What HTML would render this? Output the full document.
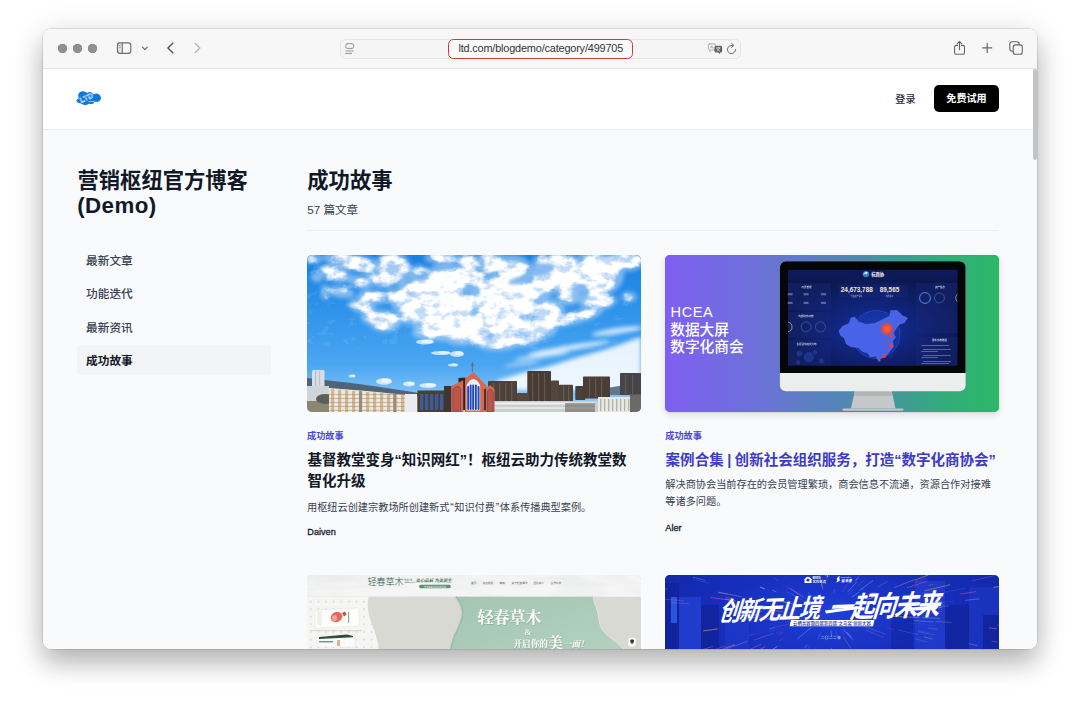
<!DOCTYPE html>
<html lang="zh-CN">
<head>
<meta charset="utf-8">
<title>成功故事 - 营销枢纽官方博客 (Demo)</title>
<style>
*{box-sizing:border-box;margin:0;padding:0}
html,body{width:1080px;height:705px;overflow:hidden;background:#fff}
body{font-family:"Liberation Sans","Noto Sans CJK SC",sans-serif;color:#111827;position:relative}
.abs{position:absolute}
#shadow{position:absolute;left:42.6px;top:28.8px;width:994.8px;height:620px;border-radius:8px;
  box-shadow:0 14px 26px rgba(0,0,0,.26),0 0 0 .5px rgba(0,0,0,.2),0 3px 36px rgba(0,0,0,.09)}
#win{position:absolute;left:43px;top:29px;width:994.4px;height:619.8px;border-radius:8px;overflow:hidden;background:#f9fafb}
#toolbar{position:absolute;left:0;top:0;width:995px;height:40px;background:#f7f7f7;border-bottom:1px solid #e4e4e4}
.tl{position:absolute;top:14.75px;width:9.5px;height:9.5px;border-radius:50%;background:#8c8f93;box-shadow:inset 0 0 0 .5px #7f8286}
#addr{position:absolute;left:297px;top:9.5px;width:401px;height:20.5px;border-radius:5.5px;background:#f5f5f5;border:1px solid #e3e3e3}
#redbox{position:absolute;left:404.7px;top:9.7px;width:185px;height:20.5px;border-radius:5.5px;border:1.5px solid #cf3a2f;background:#fbfbfb}
#url{position:absolute;left:415.4px;top:8.9px;height:20.5px;line-height:20.5px;font-size:10.9px;color:#333;white-space:nowrap;letter-spacing:-.17px}
#header{position:absolute;left:0;top:40px;width:995px;height:61px;background:#fff;border-bottom:1px solid #eceef0}
#login{position:absolute;left:852.3px;top:22.5px;font-size:10.1px;font-weight:500;color:#1f2937;line-height:16px;white-space:nowrap}
#trial{position:absolute;left:891px;top:16px;width:65px;height:27px;border-radius:5px;background:#000;color:#fff;font-size:10.1px;font-weight:700;line-height:28.4px;text-align:center;white-space:nowrap}
#scroll{position:absolute;left:990.4px;top:39.5px;width:3.8px;height:91.5px;border-radius:2px;background:#c3c3c3}
h1,h2{font-weight:700;font-size:21.3px;line-height:27.5px;color:#111827;position:absolute;white-space:nowrap}
.nav{position:absolute;left:34px;width:194px;height:30px;border-radius:4px;padding-left:9px;font-size:11.7px;line-height:32px;font-weight:500;color:#374151;white-space:nowrap;overflow:hidden}
.nav.on{background:#f3f4f6;color:#111827;font-weight:700}
#count{position:absolute;left:264.3px;top:171.6px;font-size:11.6px;line-height:18px;color:#374151;white-space:nowrap}
#rule{position:absolute;left:264px;top:201px;width:692px;height:1px;background:#eceef1}
.img{position:absolute;width:334px;height:157px;border-radius:5px;overflow:hidden}
.img svg{display:block}
.cat{position:absolute;font-size:9.17px;font-weight:700;color:#4845dd;line-height:12px;white-space:nowrap}
.ttl{position:absolute;width:340px;font-size:14.52px;font-weight:700;line-height:21.1px;color:#111827;white-space:nowrap}
.ttl .q{display:inline-block;width:7.2px;text-align:center}
.ttl .b{letter-spacing:-.4px}
.desc .q{display:inline-block;width:4.8px;text-align:center}
.desc{position:absolute;width:340px;font-size:10.18px;line-height:17px;color:#374151;white-space:nowrap}
.auth{position:absolute;font-size:9.17px;font-weight:500;-webkit-text-stroke:.28px #111827;line-height:14px;color:#111827;white-space:nowrap}
</style>
</head>
<body>
<div id="shadow"></div>
<div id="win">
  <div id="toolbar">
    <div class="tl" style="left:14.5px"></div><div class="tl" style="left:29.7px"></div><div class="tl" style="left:44.8px"></div>
    <div id="addr"></div>
    <div id="redbox"></div>
    <div id="url">ltd.com/blogdemo/category/499705</div>
    <svg style="position:absolute;left:0;top:0" width="995" height="40" viewBox="43 29 995 40" fill="none" stroke-linecap="round" stroke-linejoin="round">
<!-- sidebar -->
<path d="M119.8 42.9 H122.2 V53.3 H119.8 A2.3 2.3 0 0 1 117.5 51 V45.2 A2.3 2.3 0 0 1 119.8 42.9Z" fill="#e4e4e3" stroke="none"/>
<rect x="117.5" y="42.9" width="13.3" height="10.4" rx="2.4" stroke="#716c68" stroke-width="1.15"/>
<path d="M122.3 43 V53.2" stroke="#716c68" stroke-width="1.05"/>
<path d="M119.3 45.6 H120.5 M119.3 47.3 H120.5" stroke="#8a8682" stroke-width=".6"/>
<path d="M136.7 41.8 V54.4" stroke="#ebebeb" stroke-width=".6"/>
<path d="M142.5 47.2 L144.9 49.6 L147.3 47.2" stroke="#6a6a6a" stroke-width="1.2"/>
<path d="M172.8 43.3 L167.9 48 L172.8 52.7" stroke="#4c4c4c" stroke-width="1.35"/>
<path d="M195 43.3 L199.9 48 L195 52.7" stroke="#b3b3b3" stroke-width="1.25"/>
<!-- reader -->
<rect x="345.8" y="43.7" width="7.8" height="4.7" rx="1.5" stroke="#8f9296" stroke-width="1"/>
<path d="M345.7 51 H353.8" stroke="#b3b6b9" stroke-width="1.3" stroke-linecap="butt"/>
<path d="M345.7 53.4 H351.6" stroke="#6f6f6f" stroke-width=".75"/>
<!-- translate -->
<path d="M709.8 43.8 H714 A1.4 1.4 0 0 1 715.4 45.2 V48.5 A1.4 1.4 0 0 1 714 49.9 H711.6 L710 51.5 V49.9 H709.8 A1.4 1.4 0 0 1 708.4 48.5 V45.2 A1.4 1.4 0 0 1 709.8 43.8Z" stroke="#9b9b9b" stroke-width=".8" fill="#f6f6f6"/>
<path d="M710.6 48.4 L711.9 45.4 L713.2 48.4 M711 47.5 H712.8" stroke="#a5a5a5" stroke-width=".6"/>
<path d="M716 45.8 H720.6 A1.5 1.5 0 0 1 722.1 47.3 V50.9 A1.5 1.5 0 0 1 720.6 52.4 H720 V54 L718.2 52.4 H716 A1.5 1.5 0 0 1 714.5 50.9 V47.3 A1.5 1.5 0 0 1 716 45.8Z" fill="#5f5f5d" stroke="none"/>
<path d="M716.6 47.9 H720 M718.3 47 V47.9 M717 51.2 Q718.6 50.4 719.6 48 M719.7 51.2 Q718 50.4 717 48.6" stroke="#f3f3f3" stroke-width=".65"/>
<!-- reload -->
<path d="M735.6 49.6 A4.1 4.1 0 1 1 732.6 45.55" stroke="#6a6a6a" stroke-width="1"/>
<path d="M731.6 43.3 L733.9 45.4 L731.7 47.3" stroke="#6a6a6a" stroke-width="1"/>
<!-- share -->
<path d="M957.6 45.4 H956 A1.5 1.5 0 0 0 954.6 46.9 V52.8 A1.5 1.5 0 0 0 956 54.3 H963 A1.5 1.5 0 0 0 964.5 52.8 V46.9 A1.5 1.5 0 0 0 963 45.4 H961.4" stroke="#686561" stroke-width="1.1"/>
<path d="M959.5 41.6 V49.8 M957.2 43.8 L959.5 41.4 L961.8 43.8" stroke="#686561" stroke-width="1.1"/>
<!-- plus -->
<path d="M982.7 47.9 H991.7 M987.2 43.4 V52.4" stroke="#686561" stroke-width="1.2"/>
<!-- tabs -->
<rect x="1009.8" y="41.7" width="9.4" height="9.5" rx="2.4" stroke="#686561" stroke-width="1.1"/>
<rect x="1013.2" y="44.9" width="9.1" height="9.3" rx="2.3" stroke="#686561" stroke-width="1.1" fill="#f7f7f7"/>
</svg>

  </div>
  <div id="header">
    <svg style="position:absolute;left:32px;top:21px" width="28" height="18" viewBox="75 90 28 18">
<path d="M76.55 100.27 C76.81 99.61 78.27 98.75 78.53 97.89 C78.80 97.03 77.97 96.00 78.13 95.11 C78.30 94.22 78.83 93.16 79.52 92.53 C80.22 91.90 81.31 91.44 82.30 91.34 C83.29 91.24 84.68 91.67 85.48 91.94 C86.27 92.20 86.47 92.93 87.06 92.93 C87.66 92.93 88.25 92.00 89.05 91.94 C89.84 91.87 91.10 92.13 91.83 92.53 C92.55 92.93 92.75 94.15 93.41 94.32 C94.07 94.48 94.87 93.49 95.79 93.52 C96.72 93.56 98.11 93.85 98.97 94.52 C99.83 95.18 100.75 96.53 100.95 97.49 C101.15 98.45 100.69 99.54 100.16 100.27 C99.63 101.00 98.70 101.59 97.78 101.86 C96.85 102.12 95.33 101.59 94.60 101.86 C93.88 102.12 94.07 103.08 93.41 103.44 C92.75 103.81 91.43 103.97 90.63 104.04 C89.84 104.11 89.25 103.71 88.65 103.84 C88.06 103.97 87.72 104.63 87.06 104.83 C86.40 105.03 85.48 105.13 84.68 105.03 C83.89 104.93 82.90 104.50 82.30 104.24 C81.71 103.97 81.71 103.64 81.11 103.44 C80.52 103.25 79.42 103.31 78.73 103.05 C78.04 102.78 77.31 102.32 76.94 101.86 C76.58 101.39 76.28 100.93 76.55 100.27Z" fill="#0c79e1"/>
<g transform="rotate(-24 86.3 97.7)" font-family="Liberation Sans, sans-serif" font-weight="700"><text x="86.3" y="100.3" text-anchor="middle" font-size="7.3" fill="#1f7fe3" stroke="#fff" stroke-width=".4" letter-spacing=".05">LTD</text></g>
<text x="88.6" y="102.4" font-family="Liberation Sans, sans-serif" font-size="1.9" font-weight="700" fill="#fff">Cloud</text>
</svg>
    <div id="login">登录</div>
    <div id="trial">免费试用</div>
  </div>
  <div id="scroll"></div>

  <h1 style="left:34.5px;top:139px">营销枢纽官方博客</h1>
  <h1 style="left:34.3px;top:163.4px;font-size:22.3px;letter-spacing:.4px">(Demo)</h1>
  <div class="nav" style="top:216px">最新文章</div>
  <div class="nav" style="top:249.3px">功能迭代</div>
  <div class="nav" style="top:282.7px">最新资讯</div>
  <div class="nav on" style="top:316px">成功故事</div>

  <h2 style="left:264.3px;top:139px">成功故事</h2>
  <div id="count">57 篇文章</div>
  <div id="rule"></div>

  <div class="img" id="img1" style="left:264px;top:226px;background:#3b8fd8"><svg width="334" height="157" viewBox="0 0 334 157">
<defs>
<linearGradient id="sky" x1="0" y1="0" x2="0" y2="1"><stop offset="0" stop-color="#167fe0"/><stop offset=".35" stop-color="#2f93ea"/><stop offset=".7" stop-color="#4aa6f2"/><stop offset=".88" stop-color="#7dc0f6"/><stop offset="1" stop-color="#a5d4f8"/></linearGradient>
<filter id="cb" x="0" y="0" width="100%" height="100%" color-interpolation-filters="sRGB"><feGaussianBlur in="SourceGraphic" stdDeviation="2.2" result="d"/><feTurbulence type="fractalNoise" baseFrequency=".075 .11" numOctaves="4" seed="11" result="n"/><feColorMatrix in="n" type="matrix" values="0 0 0 0 1 0 0 0 0 1 0 0 0 0 1 2.6 0 0 0 -.8" result="na"/><feComposite in="d" in2="na" operator="arithmetic" k1="0" k2="1.55" k3="1.0" k4="-.92" result="c"/><feGaussianBlur in="c" stdDeviation=".7"/></filter>
<filter id="cb2" x="-10%" y="-10%" width="120%" height="120%"><feGaussianBlur stdDeviation="2.2"/></filter>
<filter id="b15"><feGaussianBlur stdDeviation="1.6"/></filter>
<filter id="b05"><feGaussianBlur stdDeviation=".45"/></filter>
</defs>
<rect width="334" height="157" fill="url(#sky)"/>
<g filter="url(#cb2)" opacity=".5"><ellipse cx="7" cy="4" rx="8.75" ry="5.2" fill="#dbe8f9"/><ellipse cx="45" cy="7" rx="30.0" ry="9.1" fill="#dbe8f9" transform="rotate(10 45 7)"/><ellipse cx="86" cy="13" rx="18.75" ry="16.900000000000002" fill="#dbe8f9" transform="rotate(20 86 13)"/><ellipse cx="136" cy="3" rx="18.75" ry="6.5" fill="#dbe8f9"/><ellipse cx="162" cy="10" rx="11.25" ry="13.0" fill="#dbe8f9"/><ellipse cx="28" cy="19" rx="17.5" ry="7.800000000000001" fill="#dbe8f9" transform="rotate(15 28 19)"/><ellipse cx="53" cy="27" rx="12.5" ry="6.5" fill="#dbe8f9" transform="rotate(15 53 27)"/><ellipse cx="74" cy="26" rx="13.75" ry="7.15" fill="#dbe8f9" transform="rotate(10 74 26)"/><ellipse cx="143" cy="24" rx="30.0" ry="15.600000000000001" fill="#dbe8f9"/><ellipse cx="121" cy="36" rx="23.75" ry="13.0" fill="#dbe8f9" transform="rotate(15 121 36)"/><ellipse cx="18" cy="37" rx="4.375" ry="7.800000000000001" fill="#dbe8f9"/><ellipse cx="34" cy="37" rx="13.75" ry="5.8500000000000005" fill="#dbe8f9" transform="rotate(10 34 37)"/><ellipse cx="66" cy="42" rx="16.25" ry="7.15" fill="#dbe8f9" transform="rotate(5 66 42)"/><ellipse cx="89" cy="40" rx="12.5" ry="6.5" fill="#dbe8f9"/><ellipse cx="55" cy="51" rx="13.75" ry="7.15" fill="#dbe8f9" transform="rotate(10 55 51)"/><ellipse cx="108" cy="50" rx="25.0" ry="13.0" fill="#dbe8f9" transform="rotate(10 108 50)"/><ellipse cx="139" cy="47" rx="18.75" ry="15.600000000000001" fill="#dbe8f9"/><ellipse cx="160" cy="50" rx="11.25" ry="11.700000000000001" fill="#dbe8f9"/><ellipse cx="75" cy="64" rx="21.25" ry="9.1" fill="#dbe8f9" transform="rotate(5 75 64)"/><ellipse cx="78" cy="71" rx="13.75" ry="5.8500000000000005" fill="#dbe8f9"/><ellipse cx="108" cy="62" rx="20.0" ry="7.800000000000001" fill="#dbe8f9"/><ellipse cx="140" cy="67" rx="35.0" ry="19.5" fill="#dbe8f9"/><ellipse cx="155" cy="80" rx="20.0" ry="10.4" fill="#dbe8f9"/><ellipse cx="120" cy="78" rx="15.0" ry="6.5" fill="#dbe8f9"/><ellipse cx="100" cy="34" rx="10.0" ry="7.800000000000001" fill="#dbe8f9"/><ellipse cx="112" cy="20" rx="10.0" ry="10.4" fill="#dbe8f9"/><ellipse cx="64" cy="16" rx="10.0" ry="5.2" fill="#dbe8f9"/><ellipse cx="10" cy="22" rx="6.25" ry="5.2" fill="#dbe8f9"/><ellipse cx="185" cy="8" rx="17.5" ry="11.700000000000001" fill="#dbe8f9"/><ellipse cx="205" cy="14" rx="20.0" ry="14.3" fill="#dbe8f9"/><ellipse cx="196" cy="30" rx="25.0" ry="11.700000000000001" fill="#dbe8f9"/><ellipse cx="222" cy="36" rx="27.5" ry="13.0" fill="#dbe8f9" transform="rotate(-10 222 36)"/><ellipse cx="180" cy="45" rx="20.0" ry="15.600000000000001" fill="#dbe8f9"/><ellipse cx="205" cy="52" rx="27.5" ry="15.600000000000001" fill="#dbe8f9"/><ellipse cx="238" cy="55" rx="20.0" ry="11.700000000000001" fill="#dbe8f9"/><ellipse cx="255" cy="20" rx="37.5" ry="18.2" fill="#dbe8f9"/><ellipse cx="290" cy="18" rx="27.5" ry="23.400000000000002" fill="#dbe8f9"/><ellipse cx="300" cy="8" rx="27.5" ry="10.4" fill="#dbe8f9"/><ellipse cx="250" cy="5" rx="25.0" ry="6.5" fill="#dbe8f9"/><ellipse cx="322" cy="6" rx="15.0" ry="10.4" fill="#dbe8f9"/><ellipse cx="288" cy="42" rx="17.5" ry="9.1" fill="#dbe8f9" transform="rotate(-25 288 42)"/><ellipse cx="270" cy="62" rx="27.5" ry="6.5" fill="#dbe8f9" transform="rotate(-15 270 62)"/><ellipse cx="300" cy="48" rx="11.25" ry="5.2" fill="#dbe8f9" transform="rotate(-20 300 48)"/><ellipse cx="322" cy="42" rx="7.5" ry="5.2" fill="#dbe8f9"/><ellipse cx="178" cy="66" rx="17.5" ry="13.0" fill="#dbe8f9"/><ellipse cx="200" cy="72" rx="25.0" ry="11.700000000000001" fill="#dbe8f9"/><ellipse cx="228" cy="74" rx="22.5" ry="10.4" fill="#dbe8f9"/><ellipse cx="190" cy="88" rx="22.5" ry="7.800000000000001" fill="#dbe8f9"/><ellipse cx="240" cy="66" rx="15.0" ry="7.800000000000001" fill="#dbe8f9"/><ellipse cx="170" cy="25" rx="10.0" ry="13.0" fill="#dbe8f9"/><ellipse cx="262" cy="40" rx="12.5" ry="10.4" fill="#dbe8f9"/><ellipse cx="172" cy="82" rx="12.5" ry="7.800000000000001" fill="#dbe8f9"/><ellipse cx="215" cy="86" rx="17.5" ry="5.2" fill="#dbe8f9"/></g>
<mask id="hm"><rect width="334" height="157" fill="#fff"/><g filter="url(#b15)"><ellipse cx="234" cy="15" rx="14" ry="6" fill="#000" opacity="0.92" transform="rotate(-15 234 15)"/><ellipse cx="213" cy="25" rx="12" ry="3.5" fill="#000" opacity="0.92" transform="rotate(-15 213 25)"/><ellipse cx="169" cy="37" rx="4" ry="5" fill="#000" opacity="0.92"/><ellipse cx="175" cy="9" rx="3" ry="7" fill="#000" opacity="0.92"/><ellipse cx="273" cy="39" rx="9" ry="10" fill="#000" opacity="0.92"/><ellipse cx="266" cy="50" rx="12" ry="4" fill="#000" opacity="0.92" transform="rotate(-15 266 50)"/><ellipse cx="218" cy="1" rx="7" ry="2.5" fill="#000" opacity="0.92"/><ellipse cx="246" cy="46" rx="6" ry="3" fill="#000" opacity="0.92"/><ellipse cx="322" cy="26" rx="10" ry="12" fill="#000" opacity="0.92"/><ellipse cx="100" cy="22" rx="7" ry="3" fill="#000" opacity="0.92" transform="rotate(20 100 22)"/><ellipse cx="62" cy="34" rx="10" ry="2" fill="#000" opacity="0.92" transform="rotate(12 62 34)"/></g></mask>
<g mask="url(#hm)"><g filter="url(#cb)">
<ellipse cx="7" cy="4" rx="7" ry="4" fill="#f6f9fe" opacity="0.55"/>
<ellipse cx="45" cy="7" rx="24" ry="7" fill="#f6f9fe" opacity="0.8" transform="rotate(10 45 7)"/>
<ellipse cx="86" cy="13" rx="15" ry="13" fill="#f6f9fe" opacity="0.85" transform="rotate(20 86 13)"/>
<ellipse cx="136" cy="3" rx="15" ry="5" fill="#f6f9fe" opacity="0.9"/>
<ellipse cx="162" cy="10" rx="9" ry="10" fill="#f6f9fe" opacity="0.95"/>
<ellipse cx="28" cy="19" rx="14" ry="6" fill="#f6f9fe" opacity="0.85" transform="rotate(15 28 19)"/>
<ellipse cx="53" cy="27" rx="10" ry="5" fill="#f6f9fe" opacity="0.85" transform="rotate(15 53 27)"/>
<ellipse cx="74" cy="26" rx="11" ry="5.5" fill="#f6f9fe" opacity="0.85" transform="rotate(10 74 26)"/>
<ellipse cx="143" cy="24" rx="24" ry="12" fill="#f6f9fe"/>
<ellipse cx="121" cy="36" rx="19" ry="10" fill="#f6f9fe" transform="rotate(15 121 36)"/>
<ellipse cx="18" cy="37" rx="3.5" ry="6" fill="#f6f9fe" opacity="0.5"/>
<ellipse cx="34" cy="37" rx="11" ry="4.5" fill="#f6f9fe" opacity="0.8" transform="rotate(10 34 37)"/>
<ellipse cx="66" cy="42" rx="13" ry="5.5" fill="#f6f9fe" opacity="0.9" transform="rotate(5 66 42)"/>
<ellipse cx="89" cy="40" rx="10" ry="5" fill="#f6f9fe" opacity="0.9"/>
<ellipse cx="55" cy="51" rx="11" ry="5.5" fill="#f6f9fe" opacity="0.9" transform="rotate(10 55 51)"/>
<ellipse cx="108" cy="50" rx="20" ry="10" fill="#f6f9fe" opacity="0.95" transform="rotate(10 108 50)"/>
<ellipse cx="139" cy="47" rx="15" ry="12" fill="#f6f9fe"/>
<ellipse cx="160" cy="50" rx="9" ry="9" fill="#f6f9fe"/>
<ellipse cx="75" cy="64" rx="17" ry="7" fill="#f6f9fe" opacity="0.92" transform="rotate(5 75 64)"/>
<ellipse cx="78" cy="71" rx="11" ry="4.5" fill="#f6f9fe" opacity="0.9"/>
<ellipse cx="108" cy="62" rx="16" ry="6" fill="#f6f9fe" opacity="0.9"/>
<ellipse cx="140" cy="67" rx="28" ry="15" fill="#f6f9fe"/>
<ellipse cx="155" cy="80" rx="16" ry="8" fill="#f6f9fe" opacity="0.95"/>
<ellipse cx="120" cy="78" rx="12" ry="5" fill="#f6f9fe" opacity="0.85"/>
<ellipse cx="100" cy="34" rx="8" ry="6" fill="#f6f9fe" opacity="0.8"/>
<ellipse cx="112" cy="20" rx="8" ry="8" fill="#f6f9fe" opacity="0.6"/>
<ellipse cx="64" cy="16" rx="8" ry="4" fill="#f6f9fe" opacity="0.5"/>
<ellipse cx="10" cy="22" rx="5" ry="4" fill="#f6f9fe" opacity="0.4"/>
<ellipse cx="185" cy="8" rx="14" ry="9" fill="#f6f9fe" opacity="0.95"/>
<ellipse cx="205" cy="14" rx="16" ry="11" fill="#f6f9fe" opacity="0.95"/>
<ellipse cx="196" cy="30" rx="20" ry="9" fill="#f6f9fe"/>
<ellipse cx="222" cy="36" rx="22" ry="10" fill="#f6f9fe" transform="rotate(-10 222 36)"/>
<ellipse cx="180" cy="45" rx="16" ry="12" fill="#f6f9fe"/>
<ellipse cx="205" cy="52" rx="22" ry="12" fill="#f6f9fe"/>
<ellipse cx="238" cy="55" rx="16" ry="9" fill="#f6f9fe" opacity="0.95"/>
<ellipse cx="255" cy="20" rx="30" ry="14" fill="#f6f9fe"/>
<ellipse cx="290" cy="18" rx="22" ry="18" fill="#f6f9fe"/>
<ellipse cx="300" cy="8" rx="22" ry="8" fill="#f6f9fe"/>
<ellipse cx="250" cy="5" rx="20" ry="5" fill="#f6f9fe" opacity="0.95"/>
<ellipse cx="322" cy="6" rx="12" ry="8" fill="#f6f9fe" opacity="0.95"/>
<ellipse cx="288" cy="42" rx="14" ry="7" fill="#f6f9fe" opacity="0.95" transform="rotate(-25 288 42)"/>
<ellipse cx="270" cy="62" rx="22" ry="5" fill="#f6f9fe" opacity="0.95" transform="rotate(-15 270 62)"/>
<ellipse cx="300" cy="48" rx="9" ry="4" fill="#f6f9fe" opacity="0.9" transform="rotate(-20 300 48)"/>
<ellipse cx="322" cy="42" rx="6" ry="4" fill="#f6f9fe" opacity="0.95"/>
<ellipse cx="178" cy="66" rx="14" ry="10" fill="#f6f9fe"/>
<ellipse cx="200" cy="72" rx="20" ry="9" fill="#f6f9fe"/>
<ellipse cx="228" cy="74" rx="18" ry="8" fill="#f6f9fe" opacity="0.95"/>
<ellipse cx="190" cy="88" rx="18" ry="6" fill="#f6f9fe" opacity="0.9"/>
<ellipse cx="240" cy="66" rx="12" ry="6" fill="#f6f9fe" opacity="0.9"/>
<ellipse cx="170" cy="25" rx="8" ry="10" fill="#f6f9fe" opacity="0.95"/>
<ellipse cx="262" cy="40" rx="10" ry="8" fill="#f6f9fe" opacity="0.95"/>
<ellipse cx="172" cy="82" rx="10" ry="6" fill="#f6f9fe" opacity="0.9"/>
<ellipse cx="215" cy="86" rx="14" ry="4" fill="#f6f9fe" opacity="0.85"/>
</g></g>
<g filter="url(#cb2)">
<path d="M190 126 L215 118 L240 112 L265 104 L300 94 L334 82 L334 135 L190 135Z" fill="#fff" opacity=".88"/>
<ellipse cx="262" cy="93" rx="42" ry="2.6" fill="#fff" opacity="0.8" transform="rotate(-9 262 93)"/>
<ellipse cx="235" cy="101" rx="28" ry="2" fill="#fff" opacity="0.7" transform="rotate(-8 235 101)"/>
<ellipse cx="215" cy="109" rx="18" ry="1.6" fill="#fff" opacity="0.55" transform="rotate(-6 215 109)"/>
<ellipse cx="310" cy="76" rx="26" ry="3" fill="#fff" opacity="0.75" transform="rotate(-8 310 76)"/>
</g>
<g filter="url(#b05)">
<ellipse cx="45" cy="121" rx="3.5" ry="1.6" fill="#fbfcfd" opacity="0.7"/>
<ellipse cx="46.05" cy="120.52" rx="2.1" ry="1.1199999999999999" fill="#ffffff" opacity="0.6"/>
<ellipse cx="77" cy="126.5" rx="8" ry="3.2" fill="#fbfcfd" opacity="0.7"/>
<ellipse cx="79.4" cy="125.54" rx="4.8" ry="2.2399999999999998" fill="#ffffff" opacity="0.6"/>
<ellipse cx="102" cy="129" rx="6" ry="2.4" fill="#fbfcfd" opacity="0.7"/>
<ellipse cx="103.8" cy="128.28" rx="3.5999999999999996" ry="1.68" fill="#ffffff" opacity="0.6"/>
<ellipse cx="121" cy="130.5" rx="8.5" ry="2.4" fill="#fbfcfd" opacity="0.7"/>
<ellipse cx="123.55" cy="129.78" rx="5.1" ry="1.68" fill="#ffffff" opacity="0.6"/>
<ellipse cx="146" cy="110" rx="5" ry="1.5" fill="#fbfcfd" opacity="0.7"/>
<ellipse cx="147.5" cy="109.55" rx="3.0" ry="1.0499999999999998" fill="#ffffff" opacity="0.6"/>
<ellipse cx="134" cy="98" rx="10" ry="2" fill="#fbfcfd" opacity="0.7"/>
<ellipse cx="137.0" cy="97.4" rx="6.0" ry="1.4" fill="#ffffff" opacity="0.6"/>
<ellipse cx="118" cy="87" rx="9" ry="2.5" fill="#fbfcfd" opacity="0.7"/>
<ellipse cx="120.7" cy="86.25" rx="5.3999999999999995" ry="1.75" fill="#ffffff" opacity="0.6"/>
<ellipse cx="150" cy="99" rx="7" ry="3" fill="#fbfcfd" opacity="0.7"/>
<ellipse cx="152.1" cy="98.1" rx="4.2" ry="2.0999999999999996" fill="#ffffff" opacity="0.6"/>
</g>
<g filter="url(#b05)">
<path d="M0 123 C30 126 70 131 112 138 L112 146 L0 146Z" fill="#4f6577"/>
<path d="M300 133 L318 130 L334 133 L334 140 L300 140Z" fill="#5f7890"/>
<rect x="5" y="115" width="12.5" height="20" rx="1.5" fill="#d9dfe8"/>
<rect x="8" y="116" width="1.2" height="18" fill="#b4bcc8"/><rect x="12" y="116" width="1.2" height="18" fill="#b9c1cc"/>
<rect x="0" y="131" width="22" height="26" fill="#cfd6da"/>
<rect x="0" y="146" width="30" height="11" fill="#8a8672"/>
<ellipse cx="18" cy="144" rx="9" ry="5" fill="#5b5f55"/>
<path d="M22 133 L60 136 L110 141 L110 157 L22 157Z" fill="#ece8df"/>
<rect x="24" y="134.2" width="3.2" height="24" fill="#d2ae7d" opacity=".85"/>
<rect x="31" y="134.7" width="3.2" height="24" fill="#d2ae7d" opacity=".85"/>
<rect x="38" y="135.3" width="3.2" height="24" fill="#d2ae7d" opacity=".85"/>
<rect x="45" y="135.8" width="3.2" height="24" fill="#d2ae7d" opacity=".85"/>
<rect x="52" y="136.4" width="3.2" height="24" fill="#d2ae7d" opacity=".85"/>
<rect x="59" y="137.0" width="3.2" height="24" fill="#d2ae7d" opacity=".85"/>
<rect x="66" y="137.5" width="3.2" height="24" fill="#d2ae7d" opacity=".85"/>
<rect x="73" y="138.1" width="3.2" height="24" fill="#d2ae7d" opacity=".85"/>
<rect x="80" y="138.6" width="3.2" height="24" fill="#d2ae7d" opacity=".85"/>
<rect x="87" y="139.2" width="3.2" height="24" fill="#d2ae7d" opacity=".85"/>
<rect x="94" y="139.8" width="3.2" height="24" fill="#d2ae7d" opacity=".85"/>
<rect x="101" y="140.3" width="3.2" height="24" fill="#d2ae7d" opacity=".85"/>
<rect x="108" y="140.9" width="3.2" height="24" fill="#d2ae7d" opacity=".85"/>
<rect x="22" y="139" width="88" height="1" fill="#8d8676" opacity=".45"/>
<rect x="22" y="143" width="88" height="1" fill="#8d8676" opacity=".45"/>
<rect x="22" y="147" width="88" height="1" fill="#8d8676" opacity=".45"/>
<rect x="22" y="151" width="88" height="1" fill="#8d8676" opacity=".45"/>
<rect x="22" y="155" width="88" height="1" fill="#8d8676" opacity=".45"/>
<rect x="52" y="136" width="3" height="21" fill="#77706a" opacity=".6"/><rect x="86" y="139" width="3" height="18" fill="#77706a" opacity=".6"/>
<rect x="98" y="139" width="12" height="18" fill="#e9ebee"/>
<rect x="110.5" y="135.5" width="27.5" height="21.5" fill="#4a3f36"/>
<rect x="137" y="131" width="8" height="26" fill="#3f352d"/>
<rect x="113" y="139" width="3.3" height="16" fill="#3c5a9a"/>
<rect x="118" y="139" width="3.3" height="16" fill="#3c5a9a"/>
<rect x="123" y="139" width="3.3" height="16" fill="#3c5a9a"/>
<rect x="128" y="139" width="3.3" height="16" fill="#3c5a9a"/>
<rect x="133" y="139" width="3.3" height="16" fill="#3c5a9a"/>
<rect x="181" y="126" width="29" height="21" rx=".8" fill="#4d423a"/>
<rect x="220.3" y="116" width="23.7" height="31" rx=".8" fill="#473c34"/>
<rect x="244" y="125.4" width="8" height="21" rx=".8" fill="#51463e"/>
<rect x="251.8" y="129.8" width="14.2" height="17" rx=".8" fill="#4d423a"/>
<rect x="268.3" y="131" width="10" height="14" rx=".8" fill="#4a3f38"/>
<rect x="276" y="121.4" width="27" height="22" rx=".8" fill="#483d36"/>
<rect x="313" y="118" width="21" height="22" rx=".8" fill="#46454a"/>
<rect x="210" y="138" width="12" height="9" rx=".8" fill="#52473f"/>
<rect x="186" y="128" width="1.3" height="18" fill="#7a6c5e" opacity=".55"/>
<rect x="192" y="128" width="1.3" height="18" fill="#7a6c5e" opacity=".55"/>
<rect x="198" y="128" width="1.3" height="18" fill="#7a6c5e" opacity=".55"/>
<rect x="204" y="128" width="1.3" height="18" fill="#7a6c5e" opacity=".55"/>
<rect x="225" y="118" width="1.3" height="28" fill="#7a6c5e" opacity=".55"/>
<rect x="231" y="118" width="1.3" height="28" fill="#7a6c5e" opacity=".55"/>
<rect x="237" y="118" width="1.3" height="28" fill="#7a6c5e" opacity=".55"/>
<rect x="256" y="131" width="1.3" height="15" fill="#7a6c5e" opacity=".55"/>
<rect x="261" y="131" width="1.3" height="15" fill="#7a6c5e" opacity=".55"/>
<rect x="282" y="123" width="1.3" height="19" fill="#7a6c5e" opacity=".55"/>
<rect x="288" y="123" width="1.3" height="19" fill="#7a6c5e" opacity=".55"/>
<rect x="294" y="123" width="1.3" height="19" fill="#7a6c5e" opacity=".55"/>
<rect x="318" y="120" width="1.3" height="19" fill="#7a6c5e" opacity=".55"/>
<rect x="325" y="120" width="1.3" height="19" fill="#7a6c5e" opacity=".55"/>
<rect x="186" y="146" width="148" height="11" fill="#c9ced3"/>
<rect x="188" y="147.5" width="100" height="2" fill="#f2f3f4"/><rect x="188" y="152" width="100" height="2" fill="#e6e4dc"/>
<rect x="291" y="142" width="32" height="15" fill="#e9e8e3"/>
<rect x="293" y="144" width="1.3" height="12" fill="#9b9a92" opacity=".7"/>
<rect x="297" y="144" width="1.3" height="12" fill="#9b9a92" opacity=".7"/>
<rect x="301" y="144" width="1.3" height="12" fill="#9b9a92" opacity=".7"/>
<rect x="305" y="144" width="1.3" height="12" fill="#9b9a92" opacity=".7"/>
<rect x="309" y="144" width="1.3" height="12" fill="#9b9a92" opacity=".7"/>
<rect x="313" y="144" width="1.3" height="12" fill="#9b9a92" opacity=".7"/>
<rect x="317" y="144" width="1.3" height="12" fill="#9b9a92" opacity=".7"/>
<rect x="321" y="144" width="1.3" height="12" fill="#9b9a92" opacity=".7"/>
<rect x="323" y="139.5" width="11" height="17.5" fill="#6a6a68"/>
<rect x="258" y="148" width="30" height="9" fill="#5d5a50" opacity=".55"/>
<path d="M151.5 123 L158.5 122.5 L158.5 155 L151.5 155Z" fill="#2a2522"/>
<path d="M144.2 131 L156.2 125.2 L156.2 157 L144.2 157Z" fill="#d8674c"/>
<path d="M146 135 Q149.8 128.5 153.5 133.5 L153.5 157 L146 157Z" fill="#c4523d" stroke="#3d4da8" stroke-width=".7"/>
<path d="M158 124 L166.4 117 L179.3 130.5 L179.3 157 L158 157Z" fill="#d8674c"/>
<path d="M159.6 130 Q166.3 118 173.2 130 L173.2 155.5 L159.6 155.5Z" fill="#eef1f5"/>
<rect x="160.2" y="131" width="1.9" height="24" rx=".9" fill="#1f49c0"/>
<rect x="162.7" y="129.5" width="1.9" height="25.5" rx=".9" fill="#1f49c0"/>
<rect x="165.2" y="129.5" width="1.9" height="25.5" rx=".9" fill="#1f49c0"/>
<rect x="167.9" y="129.5" width="1.9" height="25.5" rx=".9" fill="#1f49c0"/>
<rect x="170.6" y="131" width="1.9" height="24" rx=".9" fill="#1f49c0"/>
<rect x="177.2" y="134" width="2" height="21" fill="#2a2522"/>
<path d="M178.8 132.5 L183.5 130.3 L187.6 134 L187.6 157 L178.8 157Z" fill="#d8674c"/>
<path d="M180.3 137 Q183.3 131.5 186.2 137 L186.2 157 L180.3 157Z" fill="#c4523d" stroke="#3d4da8" stroke-width=".6"/>
<path d="M164.9 107 L165.8 107 L165.8 109.6 L167.2 109.6 L167.2 110.5 L165.8 110.5 L165.8 117 L164.9 117 L164.9 110.5 L163.5 110.5 L163.5 109.6 L164.9 109.6Z" fill="#6b665f"/>
</g>
</svg></div>
  <div class="cat" style="left:264px;top:401px">成功故事</div>
  <div class="ttl" style="left:264.4px;top:420.8px">基督教堂变身<span class="q">“</span>知识网红<span class="q">”</span>！枢纽云助力传统教堂数<br>智化升级</div>
  <div class="desc" style="left:264px;top:470px">用枢纽云创建宗教场所创建新式<span class="q">“</span>知识付费<span class="q">”</span>体系传播典型案例。</div>
  <div class="auth" style="left:264.3px;top:496.2px">Daiven</div>

  <div class="img" id="img2" style="left:622px;top:226px;box-shadow:0 3px 7px rgba(0,0,0,.11),0 1px 2px rgba(0,0,0,.06);background:linear-gradient(90deg,#7b62ec,#2fb56e)"><svg width="334" height="157" viewBox="0 0 334 157" font-family="Liberation Sans, Noto Sans CJK SC, sans-serif">
<defs>
<linearGradient id="g2" x1="0" y1="0" x2="1" y2="0"><stop offset="0" stop-color="#7f5ff2"/><stop offset=".3" stop-color="#6a72d6"/><stop offset=".6" stop-color="#4a8daa"/><stop offset=".85" stop-color="#31ad78"/><stop offset="1" stop-color="#2cb868"/></linearGradient>
<radialGradient id="scr" cx=".5" cy=".62" r=".55"><stop offset="0" stop-color="#1733a6"/><stop offset=".45" stop-color="#10247c"/><stop offset="1" stop-color="#0b184e"/></radialGradient>
<radialGradient id="hot" cx=".5" cy=".5" r=".5"><stop offset="0" stop-color="#ff6a3a"/><stop offset=".6" stop-color="#ee4a30" stop-opacity=".95"/><stop offset="1" stop-color="#e8402c" stop-opacity="0"/></radialGradient>
<filter id="mb"><feGaussianBlur stdDeviation=".35"/></filter>
</defs>
<rect width="334" height="157" fill="url(#g2)"/>
<g fill="#fff" font-weight="500" font-size="14.7"><text x="5.5" y="62" font-size="14.6" font-weight="400" letter-spacing=".6">HCEA</text><text x="5.2" y="79.5">数据大屏</text><text x="5.2" y="97">数字化商会</text></g>
<path d="M190 135 L226.5 135 L230.5 153.5 L186 153.5Z" fill="#c6c7c9"/>
<path d="M190 136 L226.5 136 L227.5 141 L189 141Z" fill="#b3b4b6"/>
<rect x="177.5" y="153.4" width="61" height="2.4" rx="1.2" fill="#c4c5c7"/>
<rect x="114.9" y="6.3" width="185.7" height="130" rx="6" fill="#eceded"/>
<path d="M120.9 6.3 H294.6 a6 6 0 0 1 6 6 V118 H114.9 V12.3 a6 6 0 0 1 6 -6Z" fill="#050608"/>
<rect x="123" y="14.8" width="169.4" height="96" fill="url(#scr)"/>
<g filter="url(#mb)">
<rect x="123" y="28" width="43" height="27" fill="#15277a" opacity=".4"/>
<rect x="123" y="57" width="43" height="26" fill="#15277a" opacity=".4"/>
<rect x="123" y="85" width="43" height="25.5" fill="#15277a" opacity=".4"/>
<rect x="250.5" y="28" width="42" height="50" fill="#15277a" opacity=".4"/>
<rect x="250.5" y="82" width="42" height="28.5" fill="#15277a" opacity=".4"/>
<rect x="174" y="29.5" width="69" height="13" fill="#15277a" opacity=".4"/>
<rect x="123" y="14.8" width="169.4" height="9.5" fill="#0d1c5c" opacity=".8"/>
<circle cx="211" cy="79.5" r="24" fill="#1c3fc4" opacity=".45"/><circle cx="211" cy="79.5" r="24" fill="none" stroke="#3f6ef0" stroke-width=".5" opacity=".7"/>
<path d="M173.9 75.9 L177.6 71.3 L184.1 68.5 L185.9 63.0 L189.6 62.0 L193.3 66.7 L200.7 69.4 L210.0 68.5 L217.4 64.8 L224.8 61.1 L225.7 55.6 L232.2 55.6 L237.8 61.1 L242.4 63.0 L239.6 67.6 L234.1 69.4 L231.3 73.1 L228.5 77.8 L230.4 82.4 L227.6 86.1 L228.5 91.7 L224.8 96.3 L221.1 100.9 L215.6 103.7 L213.7 106.5 L210.9 100.9 L205.4 101.9 L202.6 98.1 L197.0 96.3 L193.3 92.6 L185.9 91.7 L181.3 88.9 L179.4 83.3 L175.7 80.6Z" fill="#4a64e8" stroke="#6f86f2" stroke-width=".35" stroke-linejoin="round"/>
<circle cx="222" cy="74" r="7.2" fill="url(#hot)"/>
<circle cx="226.3" cy="80.9" r="1.5" fill="#e9412d"/>
<circle cx="225.7" cy="90.7" r="1.9" fill="#e9412d"/>
<circle cx="219.3" cy="100.9" r="1.9" fill="#e9412d"/>
<circle cx="214.6" cy="105.6" r="0.9" fill="#e9412d"/>
<circle cx="218.3" cy="83.3" r="0.7" fill="#e9412d"/>
<circle cx="223.9" cy="86.1" r="0.8" fill="#e9412d"/>
<circle cx="233.1" cy="68.9" r="0.7" fill="#e9412d"/>
<circle cx="221.1" cy="92.6" r="0.6" fill="#e9412d"/>
<circle cx="223.3" cy="96.3" r="0.7" fill="#e9412d"/>
<path d="M123 67.0 A5.0 5.0 0 0 1 123 76.8" fill="none" stroke="#e9b66a" stroke-width="0.7"/>
<circle cx="141.1" cy="71.9" r="5.0" fill="none" stroke="#6d7fb8" stroke-width="0.45"/>
<circle cx="155.4" cy="71.9" r="5.0" fill="none" stroke="#6d7fb8" stroke-width="0.45"/>
<circle cx="260.0" cy="43.0" r="5.4" fill="none" stroke="#58a6ff" stroke-width="0.8"/>
<circle cx="274.4" cy="43.0" r="5.0" fill="none" stroke="#7d8fc8" stroke-width="0.45"/>
<path d="M292.4 39.2 A5.0 5.0 0 0 0 292.4 46.7" fill="none" stroke="#d8c36a" stroke-width="0.6"/>
<circle cx="134.4" cy="98.5" r="2.6" fill="#2a47a8" opacity=".55" stroke="#5570c8" stroke-width=".25"/>
<circle cx="143.7" cy="102.4" r="4.8" fill="#2a47a8" opacity=".55" stroke="#5570c8" stroke-width=".25"/>
<circle cx="150.2" cy="97.2" r="2.0" fill="#2a47a8" opacity=".55" stroke="#5570c8" stroke-width=".25"/>
<circle cx="156.3" cy="105.9" r="2.2" fill="#2a47a8" opacity=".55" stroke="#5570c8" stroke-width=".25"/>
<circle cx="133.1" cy="107.4" r="1.9" fill="#2a47a8" opacity=".55" stroke="#5570c8" stroke-width=".25"/>
<rect x="256.3" y="90.2" width="27.8" height=".55" fill="#c9d2f0" opacity=".7"/>
<rect x="258.1" y="94.3" width="27.8" height=".55" fill="#c9d2f0" opacity=".7"/>
<rect x="256.3" y="96.1" width="16.7" height=".55" fill="#c9d2f0" opacity=".7"/>
<rect x="258.1" y="100.2" width="27.8" height=".55" fill="#c9d2f0" opacity=".7"/>
<rect x="256.3" y="102.0" width="16.7" height=".55" fill="#c9d2f0" opacity=".7"/>
<rect x="258.1" y="106.3" width="27.8" height=".55" fill="#c9d2f0" opacity=".7"/>
<rect x="256.3" y="108.1" width="27.8" height=".55" fill="#c9d2f0" opacity=".7"/>
<rect x="122.7" y="38.1" width="5" height="2.2" fill="#8f9fd6" opacity=".55"/>
<rect x="138.6" y="38.1" width="5" height="2.2" fill="#8f9fd6" opacity=".55"/>
<rect x="156.0" y="38.1" width="5" height="2.2" fill="#8f9fd6" opacity=".55"/>
<rect x="122.7" y="46.8" width="5" height="2.2" fill="#8f9fd6" opacity=".55"/>
<rect x="138.6" y="46.8" width="5" height="2.2" fill="#8f9fd6" opacity=".55"/>
<rect x="156.0" y="46.8" width="5" height="2.2" fill="#8f9fd6" opacity=".55"/>
</g>
<g fill="#fff" font-weight="700" text-anchor="middle">
<circle cx="201" cy="19.1" r="3.2" fill="#2f7fd8"/><path d="M199 20.8 a2.3 2.3 0 0 1 4 -2.8 a2.8 2.8 0 0 0 -4 2.8Z" fill="#bfe3ff"/><circle cx="201.3" cy="18.2" r="1.1" fill="#e8f3ff"/>
<text x="212.7" y="20.7" font-size="4.3">杭商协</text>
<text x="191.8" y="37" font-size="6.4" fill="#f8ecc9">24,673,788</text><text x="224.5" y="37" font-size="6.4" fill="#f8ecc9">89,565</text>
<g font-size="2.5" font-weight="500" opacity=".85"><text x="141.5" y="33">会员管理</text><text x="141" y="61.7">内部财务动态</text><text x="141.5" y="89.8">各月活动频次分布</text><text x="275" y="33">资产信息</text><text x="274.5" y="86">最新动态数据</text><text x="191.5" y="41.7" font-size="1.9" opacity=".7">行业资产总量</text><text x="224.5" y="41.7" font-size="1.9" opacity=".7">会员总量</text></g>
</g>
</svg></div>
  <div class="cat" style="left:622.3px;top:401px">成功故事</div>
  <div class="ttl" style="left:622.6px;top:420.8px;color:#3d3bc9">案例合集<span class="b"> | </span>创新社会组织服务，打造<span class="q">“</span>数字化商协会<span class="q">”</span></div>
  <div class="desc" style="left:622.3px;top:447.2px">解决商协会当前存在的会员管理繁琐，商会信息不流通，资源合作对接难<br>等诸多问题。</div>
  <div class="auth" style="left:622.3px;top:491.6px">Aler</div>

  <div class="img" id="img3" style="left:264px;top:546px;background:#c9d8cc"><svg width="334" height="157" viewBox="0 0 334 157" font-family="Liberation Sans, Noto Sans CJK SC, sans-serif">
<defs>
<linearGradient id="g3" x1="0" y1="0" x2="1" y2="1"><stop offset="0" stop-color="#a3c6b2"/><stop offset="1" stop-color="#b5d1c0"/></linearGradient>
<filter id="mar" x="0" y="0" width="100%" height="100%"><feTurbulence type="fractalNoise" baseFrequency=".02 .09" numOctaves="3" seed="5"/><feColorMatrix type="matrix" values="0 0 0 0 .62 0 0 0 0 .66 0 0 0 0 .63 1.6 0 0 0 -.62"/></filter>
<pattern id="peg" width="7.6" height="7.6" patternUnits="userSpaceOnUse"><circle cx="3.8" cy="3.8" r=".65" fill="#b4b8b4"/></pattern>
<filter id="ts"><feDropShadow dx=".4" dy=".6" stdDeviation=".5" flood-color="#4f7562" flood-opacity=".55"/></filter>
</defs>
<rect width="334" height="157" fill="#d9d9d4"/>
<rect width="334" height="21.8" fill="#f4f5f4"/><rect width="334" height="21.8" filter="url(#mar)" opacity=".3"/>
<rect x="0" y="22" width="80" height="135" fill="#f5f5f3"/><rect x="0" y="22" width="80" height="135" fill="url(#peg)"/>
<path d="M61.7 21.8 C60 28 60.8 36 62.5 42 C65 50 68.5 58 70.5 66.7 C71.5 71 72.5 76 73 80 L160 80 L160 21.8Z" fill="#d9d9d4"/>
<rect x="8" y="34" width="44" height="18" rx="1.5" fill="#fdfdfc" stroke="#e1e2de" stroke-width=".5" transform="rotate(-3 30 43)"/>
<ellipse cx="29.5" cy="42" rx="6" ry="5" fill="#e4695a" transform="rotate(-20 29.5 42)"/><path d="M35 38 l3 -1.5 l1.5 3 l-2.5 2Z" fill="#d9483e"/><ellipse cx="27.5" cy="43" rx="2.5" ry="3" fill="#f3a79c"/>
<rect x="10" y="36" width="5" height="14" fill="#eef0ec"/><rect x="41" y="37" width="1.2" height="11" fill="#5c8a74" opacity=".7"/>
<rect x="3" y="55" width="52" height="1.2" fill="#d9dad6"/>
<rect x="10" y="60" width="38" height="12" rx="1" fill="#fbfbfa" stroke="#e1e2de" stroke-width=".4"/><path d="M12 62 L40 59.5 L46 61 L46 62.2 L12 64Z" fill="#2f4a40"/><rect x="12" y="66" width="14" height="1.4" fill="#5f9a7e"/><rect x="30" y="65" width="3" height="6" fill="#e08a70" opacity=".7"/>
<path d="M148.8 21.8 C152 26 155.5 31 155.5 37.5 C155.5 46 150 55 147 62 C145 67 144 71 143.6 76 L143.6 86 L320 86 L320 80 C316 70 306 66 298 58 C290 50 293 40 289 32 C287 27 286.5 25 286.5 21.8Z" fill="url(#g3)"/>
<path d="M148.8 21.8 C152 26 155.5 31 155.5 37.5 C155.5 46 150 55 147 62 C145 67 144 71 143.6 76" fill="none" stroke="#86ad98" stroke-width="1.6" opacity=".55"/>
<path d="M286.5 22 C286.5 25 287 27 289 32 C293 40 290 50 298 58 C306 66 316 70 320 80" fill="none" stroke="#e9efe9" stroke-width=".8" opacity=".8"/>
<g fill="#2f5d49"><text x="60.5" y="10.4" font-size="9.1" font-weight="300" letter-spacing="-.1">轻春草木</text><text x="97.5" y="5.8" font-size="1.9">轻春草木</text><text x="97.5" y="8.3" font-size="1.9">QINGCHUN</text>
<text x="108.5" y="6.6" font-size="4.4" font-style="italic" font-family="Liberation Serif, Noto Serif CJK SC, serif" font-weight="700">美心品质 为美而生</text><rect x="112" y="9.8" width="31.8" height="3.5" rx="1.75" fill="#5e9079"/><text x="127.9" y="12.5" font-size="2.2" fill="#eaf3ee" text-anchor="middle">天然草本护肤专家品牌</text>
<g font-size="2.7" fill="#4b6f5f"><text x="164" y="8.7">首页</text><text x="175.5" y="8.7">进店逛逛</text><text x="192.5" y="8.7">商城</text><text x="204.5" y="8.7">关于轻春草木</text><text x="226.5" y="8.7">团队简介</text><text x="243.5" y="8.7">合作伙伴</text></g></g>
<g fill="#fff" font-family="Liberation Serif, Noto Serif CJK SC, serif" filter="url(#ts)"><text x="170.5" y="47.6" font-size="16" font-weight="700" letter-spacing="0">轻春草木</text><text x="217.5" y="59.5" font-size="8.5">&amp;</text><text x="206.5" y="72" font-size="8.6" font-weight="700">开启你的<tspan font-size="15" dy=".8">美</tspan><tspan dy="-.8" font-style="italic">一面！</tspan></text></g>
<rect x="321.5" y="62.8" width="7.2" height="8.4" rx="1.8" fill="#fff"/><rect x="323.4" y="64.6" width="3.4" height="3.2" rx=".6" fill="#2b2b2b"/><rect x="324" y="68.2" width="2.2" height=".7" fill="#2b2b2b"/>
</svg></div>
  <div class="img" id="img4" style="left:622px;top:546px;background:#1a36c4"><svg width="334" height="157" viewBox="0 0 334 157" font-family="Liberation Sans, Noto Sans CJK SC, sans-serif">
<defs>
<radialGradient id="g4" cx=".49" cy=".25" r=".6"><stop offset="0" stop-color="#1f3fd6"/><stop offset=".5" stop-color="#172fbe"/><stop offset="1" stop-color="#1226a6"/></radialGradient>
</defs>
<rect width="334" height="157" fill="url(#g4)"/>
<rect x="0" y="8" width="14" height="70" fill="#102296" opacity="0.7"/>
<rect x="14" y="22" width="22" height="60" fill="#2a4be0" opacity="0.55"/>
<rect x="36" y="30" width="18" height="50" fill="#0f2090" opacity="0.6"/>
<rect x="250" y="6" width="30" height="75" fill="#2a49dc" opacity="0.45"/>
<rect x="280" y="30" width="24" height="50" fill="#0f2090" opacity="0.55"/>
<rect x="304" y="12" width="30" height="70" fill="#1d3ac8" opacity="0.6"/>
<rect x="60" y="45" width="24" height="35" fill="#2443d6" opacity="0.4"/>
<rect x="226" y="40" width="22" height="40" fill="#10229a" opacity="0.45"/>
<rect x="6" y="22" width="6" height="26" fill="#2f62f0" opacity="0.8"/>
<rect x="318" y="40" width="16" height="40" fill="#0e1d88" opacity="0.6"/>
<line x1="172.2" y1="107.1" x2="173.2" y2="115.1" stroke="#e0a0ff" stroke-width="0.3" opacity="0.62"/>
<line x1="249.7" y1="5.2" x2="264.3" y2="-0.4" stroke="#ffd24a" stroke-width="0.7" opacity="0.59"/>
<line x1="76.8" y1="21.8" x2="53.7" y2="17.4" stroke="#ffd24a" stroke-width="0.4" opacity="0.74"/>
<line x1="18.9" y1="25.9" x2="-0.9" y2="24.1" stroke="#ff5fc8" stroke-width="0.4" opacity="0.69"/>
<line x1="99.9" y1="14.0" x2="95.1" y2="12.1" stroke="#ffffff" stroke-width="0.7" opacity="0.62"/>
<line x1="242.0" y1="12.8" x2="261.9" y2="6.2" stroke="#ff4fa0" stroke-width="0.7" opacity="0.68"/>
<line x1="2.6" y1="-12.1" x2="-4.5" y2="-14.3" stroke="#5f86ff" stroke-width="0.3" opacity="0.37"/>
<line x1="94.8" y1="39.9" x2="74.6" y2="40.3" stroke="#ffffff" stroke-width="0.7" opacity="0.58"/>
<line x1="100.5" y1="71.6" x2="86.8" y2="78.7" stroke="#ffd24a" stroke-width="0.5" opacity="0.66"/>
<line x1="311.9" y1="-4.0" x2="336.5" y2="-11.1" stroke="#7fe0ff" stroke-width="0.5" opacity="0.78"/>
<line x1="261.4" y1="-1.5" x2="278.8" y2="-8.6" stroke="#ffd24a" stroke-width="0.5" opacity="0.48"/>
<line x1="314.8" y1="76.8" x2="339.9" y2="83.2" stroke="#ff5fc8" stroke-width="0.5" opacity="0.71"/>
<line x1="119.8" y1="55.1" x2="110.0" y2="58.8" stroke="#ff4fa0" stroke-width="0.3" opacity="0.37"/>
<line x1="137.4" y1="24.9" x2="121.5" y2="16.5" stroke="#5f86ff" stroke-width="0.5" opacity="0.58"/>
<line x1="240.5" y1="38.2" x2="247.3" y2="38.1" stroke="#ffc04a" stroke-width="0.3" opacity="0.78"/>
<line x1="236.5" y1="30.7" x2="247.2" y2="29.5" stroke="#7fa2ff" stroke-width="0.5" opacity="0.49"/>
<line x1="328.7" y1="12.3" x2="341.8" y2="10.2" stroke="#e0a0ff" stroke-width="0.7" opacity="0.64"/>
<line x1="67.0" y1="-1.1" x2="51.4" y2="-7.5" stroke="#ffc04a" stroke-width="0.5" opacity="0.54"/>
<line x1="151.3" y1="-0.0" x2="149.2" y2="-7.0" stroke="#ffffff" stroke-width="0.5" opacity="0.60"/>
<line x1="257.2" y1="42.7" x2="275.2" y2="43.4" stroke="#7fa2ff" stroke-width="0.7" opacity="0.63"/>
<line x1="138.5" y1="22.2" x2="125.6" y2="13.7" stroke="#e0a0ff" stroke-width="0.5" opacity="0.66"/>
<line x1="79.0" y1="106.0" x2="66.0" y2="116.4" stroke="#7fa2ff" stroke-width="0.3" opacity="0.78"/>
<line x1="249.3" y1="45.5" x2="268.3" y2="47.0" stroke="#ffffff" stroke-width="0.5" opacity="0.43"/>
<line x1="222.4" y1="120.6" x2="231.9" y2="133.8" stroke="#ffffff" stroke-width="0.5" opacity="0.70"/>
<line x1="288.1" y1="96.5" x2="309.3" y2="106.4" stroke="#7fe0ff" stroke-width="0.5" opacity="0.58"/>
<line x1="123.3" y1="3.8" x2="116.3" y2="-2.4" stroke="#ff4fa0" stroke-width="0.3" opacity="0.40"/>
<line x1="128.2" y1="82.3" x2="117.8" y2="95.1" stroke="#e0a0ff" stroke-width="0.4" opacity="0.39"/>
<line x1="160.4" y1="1.2" x2="159.5" y2="-9.4" stroke="#ffffff" stroke-width="0.4" opacity="0.70"/>
<line x1="340.1" y1="61.5" x2="351.9" y2="63.1" stroke="#7fe0ff" stroke-width="0.5" opacity="0.50"/>
<line x1="182.9" y1="16.8" x2="191.8" y2="6.8" stroke="#7fe0ff" stroke-width="0.7" opacity="0.48"/>
<line x1="182.8" y1="-2.3" x2="186.3" y2="-9.7" stroke="#ff4fa0" stroke-width="0.5" opacity="0.54"/>
<line x1="16.2" y1="95.1" x2="9.0" y2="97.8" stroke="#7fa2ff" stroke-width="0.7" opacity="0.77"/>
<line x1="298.6" y1="-37.6" x2="309.4" y2="-43.6" stroke="#ffd24a" stroke-width="0.3" opacity="0.69"/>
<line x1="232.7" y1="-29.9" x2="241.4" y2="-38.5" stroke="#ffffff" stroke-width="0.5" opacity="0.75"/>
<line x1="269.7" y1="-37.0" x2="287.1" y2="-49.3" stroke="#ff5fc8" stroke-width="0.4" opacity="0.37"/>
<line x1="277.4" y1="-8.7" x2="298.6" y2="-17.5" stroke="#ff4fa0" stroke-width="0.3" opacity="0.36"/>
<line x1="161.9" y1="5.6" x2="161.5" y2="-1.4" stroke="#7fa2ff" stroke-width="0.7" opacity="0.37"/>
<line x1="202.5" y1="24.4" x2="209.2" y2="21.9" stroke="#ffc04a" stroke-width="0.7" opacity="0.72"/>
<line x1="221.7" y1="52.8" x2="228.9" y2="54.5" stroke="#ff5fc8" stroke-width="0.4" opacity="0.46"/>
<line x1="138.2" y1="139.4" x2="137.1" y2="144.1" stroke="#7fa2ff" stroke-width="0.7" opacity="0.63"/>
<line x1="186.6" y1="22.4" x2="193.8" y2="17.3" stroke="#ffffff" stroke-width="0.7" opacity="0.37"/>
<line x1="93.2" y1="123.9" x2="82.4" y2="137.0" stroke="#7fe0ff" stroke-width="0.3" opacity="0.41"/>
<line x1="330.3" y1="84.5" x2="352.3" y2="90.5" stroke="#ff5fc8" stroke-width="0.7" opacity="0.49"/>
<line x1="130.5" y1="84.7" x2="122.7" y2="95.5" stroke="#ffffff" stroke-width="0.5" opacity="0.47"/>
<line x1="259.3" y1="34.3" x2="267.2" y2="33.9" stroke="#7fa2ff" stroke-width="0.7" opacity="0.71"/>
<line x1="132.1" y1="30.2" x2="118.1" y2="26.4" stroke="#ffc04a" stroke-width="0.7" opacity="0.64"/>
<line x1="326.6" y1="66.0" x2="332.5" y2="67.0" stroke="#e0a0ff" stroke-width="0.5" opacity="0.54"/>
<line x1="128.7" y1="-18.4" x2="125.1" y2="-24.4" stroke="#ffc04a" stroke-width="0.5" opacity="0.66"/>
<line x1="249.5" y1="63.5" x2="262.6" y2="67.3" stroke="#7fa2ff" stroke-width="0.5" opacity="0.52"/>
<line x1="286.9" y1="-16.7" x2="295.6" y2="-20.6" stroke="#e0a0ff" stroke-width="0.3" opacity="0.77"/>
<line x1="144.6" y1="-58.8" x2="142.6" y2="-68.9" stroke="#ff4fa0" stroke-width="0.3" opacity="0.68"/>
<line x1="123.0" y1="28.3" x2="106.2" y2="24.0" stroke="#7fa2ff" stroke-width="0.7" opacity="0.41"/>
<line x1="168.8" y1="18.1" x2="169.8" y2="13.9" stroke="#ff5fc8" stroke-width="0.7" opacity="0.43"/>
<line x1="323.9" y1="52.9" x2="331.5" y2="53.6" stroke="#ff5fc8" stroke-width="0.7" opacity="0.73"/>
<line x1="278.3" y1="17.4" x2="300.3" y2="13.3" stroke="#7fa2ff" stroke-width="0.4" opacity="0.40"/>
<line x1="162.3" y1="-67.6" x2="162.3" y2="-71.4" stroke="#5f86ff" stroke-width="0.4" opacity="0.72"/>
<line x1="166.3" y1="72.3" x2="166.8" y2="78.7" stroke="#ff4fa0" stroke-width="0.5" opacity="0.52"/>
<line x1="97.0" y1="68.9" x2="85.5" y2="74.1" stroke="#ff5fc8" stroke-width="0.7" opacity="0.58"/>
<line x1="255.7" y1="29.1" x2="277.2" y2="26.9" stroke="#7fe0ff" stroke-width="0.7" opacity="0.66"/>
<line x1="168.7" y1="-42.5" x2="169.3" y2="-52.5" stroke="#e0a0ff" stroke-width="0.4" opacity="0.64"/>
<line x1="204.6" y1="20.1" x2="210.3" y2="17.5" stroke="#e0a0ff" stroke-width="0.7" opacity="0.61"/>
<line x1="194.5" y1="15.6" x2="208.2" y2="5.3" stroke="#7fe0ff" stroke-width="0.5" opacity="0.77"/>
<line x1="231.1" y1="-16.2" x2="244.5" y2="-27.0" stroke="#ff4fa0" stroke-width="0.5" opacity="0.75"/>
<line x1="138.7" y1="78.1" x2="130.6" y2="91.1" stroke="#ffd24a" stroke-width="0.4" opacity="0.61"/>
<line x1="170.8" y1="101.3" x2="172.6" y2="115.9" stroke="#ff4fa0" stroke-width="0.7" opacity="0.67"/>
<line x1="196.5" y1="108.1" x2="203.5" y2="122.6" stroke="#ffc04a" stroke-width="0.3" opacity="0.57"/>
<line x1="133.4" y1="-58.5" x2="130.8" y2="-66.7" stroke="#7fa2ff" stroke-width="0.7" opacity="0.76"/>
<line x1="265.1" y1="-11.2" x2="282.5" y2="-19.7" stroke="#ff5fc8" stroke-width="0.4" opacity="0.73"/>
<line x1="166.4" y1="73.3" x2="166.9" y2="79.7" stroke="#7fe0ff" stroke-width="0.3" opacity="0.75"/>
<line x1="158.3" y1="138.1" x2="157.9" y2="145.3" stroke="#ff4fa0" stroke-width="0.3" opacity="0.68"/>
<line x1="199.8" y1="51.7" x2="220.2" y2="59.0" stroke="#ffffff" stroke-width="0.3" opacity="0.51"/>
<line x1="44.8" y1="-0.7" x2="40.3" y2="-2.2" stroke="#5f86ff" stroke-width="0.5" opacity="0.55"/>
<line x1="102.6" y1="41.8" x2="84.5" y2="42.8" stroke="#e0a0ff" stroke-width="0.7" opacity="0.41"/>
<line x1="92.8" y1="130.6" x2="89.9" y2="134.2" stroke="#ff4fa0" stroke-width="0.3" opacity="0.55"/>
<line x1="96.9" y1="31.6" x2="80.2" y2="29.9" stroke="#5f86ff" stroke-width="0.5" opacity="0.69"/>
<line x1="125.2" y1="116.7" x2="119.7" y2="128.0" stroke="#ffffff" stroke-width="0.3" opacity="0.69"/>
<line x1="294.7" y1="19.1" x2="311.2" y2="16.6" stroke="#ff5fc8" stroke-width="0.7" opacity="0.58"/>
<line x1="233.0" y1="55.0" x2="252.9" y2="59.6" stroke="#7fe0ff" stroke-width="0.4" opacity="0.43"/>
<line x1="265.4" y1="-12.1" x2="271.4" y2="-15.0" stroke="#ffc04a" stroke-width="0.4" opacity="0.76"/>
<line x1="82.9" y1="-23.7" x2="74.1" y2="-30.6" stroke="#ffffff" stroke-width="0.4" opacity="0.56"/>
<line x1="142.2" y1="69.5" x2="139.7" y2="73.1" stroke="#7fe0ff" stroke-width="0.7" opacity="0.51"/>
<line x1="154.7" y1="91.6" x2="152.2" y2="106.3" stroke="#7fa2ff" stroke-width="0.7" opacity="0.58"/>
<line x1="166.2" y1="128.9" x2="166.4" y2="136.7" stroke="#5f86ff" stroke-width="0.7" opacity="0.55"/>
<line x1="177.5" y1="17.0" x2="183.4" y2="8.0" stroke="#ff5fc8" stroke-width="0.4" opacity="0.47"/>
<line x1="200.4" y1="54.6" x2="218.6" y2="62.5" stroke="#ff5fc8" stroke-width="0.4" opacity="0.66"/>
<line x1="40.6" y1="5.5" x2="28.0" y2="2.1" stroke="#7fe0ff" stroke-width="0.4" opacity="0.74"/>
<line x1="197.7" y1="-27.1" x2="200.3" y2="-32.1" stroke="#7fe0ff" stroke-width="0.4" opacity="0.74"/>
<line x1="112.7" y1="71.2" x2="96.4" y2="81.7" stroke="#e0a0ff" stroke-width="0.7" opacity="0.78"/>
<line x1="77.4" y1="85.2" x2="64.0" y2="92.5" stroke="#e0a0ff" stroke-width="0.5" opacity="0.75"/>
<line x1="147.5" y1="21.7" x2="142.9" y2="16.9" stroke="#7fa2ff" stroke-width="0.3" opacity="0.70"/>
<line x1="107.7" y1="-15.6" x2="98.9" y2="-24.2" stroke="#e0a0ff" stroke-width="0.4" opacity="0.44"/>
<line x1="130.6" y1="34.9" x2="114.7" y2="33.1" stroke="#e0a0ff" stroke-width="0.3" opacity="0.60"/>
<line x1="328.1" y1="12.6" x2="335.9" y2="11.4" stroke="#ff5fc8" stroke-width="0.3" opacity="0.36"/>
<line x1="83.7" y1="-5.4" x2="71.7" y2="-12.0" stroke="#7fa2ff" stroke-width="0.5" opacity="0.50"/>
<line x1="258.7" y1="-21.9" x2="264.2" y2="-25.4" stroke="#7fa2ff" stroke-width="0.3" opacity="0.68"/>
<line x1="76.6" y1="116.8" x2="62.2" y2="129.7" stroke="#ffd24a" stroke-width="0.7" opacity="0.66"/>
<line x1="177.7" y1="84.6" x2="181.8" y2="98.0" stroke="#ff4fa0" stroke-width="0.3" opacity="0.73"/>
<line x1="138.8" y1="-13.4" x2="134.5" y2="-22.4" stroke="#ff5fc8" stroke-width="0.7" opacity="0.44"/>
<line x1="132.3" y1="39.9" x2="117.1" y2="40.5" stroke="#ff4fa0" stroke-width="0.7" opacity="0.43"/>
<line x1="278.6" y1="-12.0" x2="289.3" y2="-16.7" stroke="#5f86ff" stroke-width="0.7" opacity="0.59"/>
<line x1="111.5" y1="17.0" x2="107.3" y2="15.2" stroke="#ffd24a" stroke-width="0.5" opacity="0.70"/>
<line x1="226.2" y1="86.2" x2="232.1" y2="90.6" stroke="#ffd24a" stroke-width="0.3" opacity="0.43"/>
<line x1="118.7" y1="57.2" x2="114.1" y2="59.1" stroke="#ff5fc8" stroke-width="0.4" opacity="0.55"/>
<line x1="228.1" y1="127.8" x2="233.7" y2="135.6" stroke="#5f86ff" stroke-width="0.7" opacity="0.36"/>
<line x1="148.7" y1="0.1" x2="147.4" y2="-3.3" stroke="#e0a0ff" stroke-width="0.3" opacity="0.76"/>
<line x1="212.6" y1="12.0" x2="222.8" y2="6.5" stroke="#ffd24a" stroke-width="0.4" opacity="0.50"/>
<line x1="292.8" y1="108.0" x2="306.5" y2="115.4" stroke="#ffffff" stroke-width="0.5" opacity="0.79"/>
<line x1="307.2" y1="5.7" x2="332.1" y2="0.0" stroke="#e0a0ff" stroke-width="0.4" opacity="0.60"/>
<line x1="243.5" y1="47.8" x2="270.3" y2="50.9" stroke="#5f86ff" stroke-width="0.3" opacity="0.38"/>
<line x1="125.1" y1="48.5" x2="107.7" y2="53.0" stroke="#ff5fc8" stroke-width="0.3" opacity="0.66"/>
<line x1="270.7" y1="46.3" x2="286.4" y2="47.5" stroke="#ffd24a" stroke-width="0.5" opacity="0.44"/>
<line x1="265.9" y1="28.4" x2="288.7" y2="26.1" stroke="#5f86ff" stroke-width="0.3" opacity="0.52"/>
<line x1="164.8" y1="-38.5" x2="164.9" y2="-46.8" stroke="#ffffff" stroke-width="0.4" opacity="0.73"/>
<line x1="231.0" y1="74.2" x2="240.4" y2="79.1" stroke="#ff4fa0" stroke-width="0.4" opacity="0.73"/>
<line x1="222.3" y1="-1.7" x2="239.5" y2="-13.5" stroke="#5f86ff" stroke-width="0.4" opacity="0.51"/>
<line x1="108.3" y1="58.3" x2="88.9" y2="65.2" stroke="#e0a0ff" stroke-width="0.5" opacity="0.47"/>
<line x1="232.5" y1="113.6" x2="241.5" y2="123.4" stroke="#ff4fa0" stroke-width="0.7" opacity="0.37"/>
<line x1="233.3" y1="116.7" x2="244.4" y2="129.2" stroke="#ff5fc8" stroke-width="0.3" opacity="0.49"/>
<line x1="37.9" y1="-16.6" x2="32.9" y2="-18.9" stroke="#7fa2ff" stroke-width="0.7" opacity="0.56"/>
<line x1="252.4" y1="-19.1" x2="271.0" y2="-31.2" stroke="#7fa2ff" stroke-width="0.3" opacity="0.44"/>
<line x1="203.5" y1="-63.0" x2="206.4" y2="-70.4" stroke="#ffffff" stroke-width="0.3" opacity="0.55"/>
<line x1="190.2" y1="5.6" x2="199.2" y2="-5.5" stroke="#7fe0ff" stroke-width="0.4" opacity="0.61"/>
<line x1="227.6" y1="41.4" x2="254.3" y2="42.6" stroke="#ffd24a" stroke-width="0.7" opacity="0.58"/>
<line x1="229.1" y1="12.7" x2="249.8" y2="4.4" stroke="#ffd24a" stroke-width="0.7" opacity="0.43"/>
<line x1="303.8" y1="84.3" x2="310.4" y2="86.4" stroke="#7fa2ff" stroke-width="0.3" opacity="0.44"/>
<line x1="195.8" y1="23.2" x2="207.9" y2="17.5" stroke="#ffd24a" stroke-width="0.3" opacity="0.64"/>
<line x1="175.5" y1="-61.3" x2="176.4" y2="-69.0" stroke="#e0a0ff" stroke-width="0.3" opacity="0.48"/>
<line x1="256.2" y1="18.6" x2="268.9" y2="15.9" stroke="#ff5fc8" stroke-width="0.3" opacity="0.56"/>
<line x1="158.0" y1="14.9" x2="156.2" y2="7.3" stroke="#e0a0ff" stroke-width="0.3" opacity="0.77"/>
<line x1="130.1" y1="-8.8" x2="121.3" y2="-21.4" stroke="#ff5fc8" stroke-width="0.4" opacity="0.46"/>
<line x1="183.2" y1="19.5" x2="188.6" y2="14.2" stroke="#e0a0ff" stroke-width="0.3" opacity="0.46"/>
<line x1="98.0" y1="117.9" x2="93.7" y2="123.0" stroke="#ffd24a" stroke-width="0.7" opacity="0.77"/>
<line x1="71.4" y1="26.0" x2="45.7" y2="22.5" stroke="#ff4fa0" stroke-width="0.7" opacity="0.75"/>
<line x1="265.5" y1="32.1" x2="283.6" y2="30.9" stroke="#7fa2ff" stroke-width="0.5" opacity="0.78"/>
<line x1="332.7" y1="50.2" x2="338.3" y2="50.6" stroke="#7fe0ff" stroke-width="0.5" opacity="0.58"/>
<line x1="259.0" y1="61.9" x2="267.7" y2="64.0" stroke="#ffd24a" stroke-width="0.5" opacity="0.57"/>
<line x1="263.1" y1="53.0" x2="272.2" y2="54.3" stroke="#ffffff" stroke-width="0.4" opacity="0.40"/>
<line x1="135.0" y1="91.9" x2="133.0" y2="95.8" stroke="#7fe0ff" stroke-width="0.7" opacity="0.69"/>
<line x1="107.2" y1="-66.3" x2="98.9" y2="-81.8" stroke="#5f86ff" stroke-width="0.4" opacity="0.54"/>
<line x1="259.6" y1="15.8" x2="285.1" y2="9.7" stroke="#ffd24a" stroke-width="0.5" opacity="0.78"/>
<line x1="155.8" y1="57.4" x2="152.6" y2="65.2" stroke="#5f86ff" stroke-width="0.5" opacity="0.69"/>
<line x1="263.6" y1="10.4" x2="268.5" y2="9.0" stroke="#ffc04a" stroke-width="0.4" opacity="0.59"/>
<line x1="181.5" y1="57.0" x2="186.3" y2="62.0" stroke="#e0a0ff" stroke-width="0.5" opacity="0.79"/>
<line x1="204.3" y1="-69.2" x2="205.6" y2="-72.6" stroke="#7fe0ff" stroke-width="0.4" opacity="0.36"/>
<line x1="89.1" y1="58.8" x2="83.5" y2="60.3" stroke="#ffc04a" stroke-width="0.3" opacity="0.55"/>
<line x1="153.6" y1="119.4" x2="152.4" y2="129.1" stroke="#ffffff" stroke-width="0.5" opacity="0.37"/>
<line x1="47.9" y1="71.5" x2="29.7" y2="76.7" stroke="#ffd24a" stroke-width="0.4" opacity="0.68"/>
<line x1="214.3" y1="-8.5" x2="226.2" y2="-19.5" stroke="#5f86ff" stroke-width="0.4" opacity="0.48"/>
<line x1="178.3" y1="54.4" x2="187.8" y2="64.6" stroke="#e0a0ff" stroke-width="0.7" opacity="0.58"/>
<line x1="168.3" y1="-60.4" x2="169.1" y2="-76.6" stroke="#ffc04a" stroke-width="0.7" opacity="0.52"/>
<line x1="113.2" y1="5.6" x2="108.7" y2="2.7" stroke="#7fe0ff" stroke-width="0.3" opacity="0.53"/>
<line x1="103.6" y1="86.9" x2="89.8" y2="98.0" stroke="#e0a0ff" stroke-width="0.5" opacity="0.78"/>
<line x1="207.2" y1="77.3" x2="216.5" y2="85.6" stroke="#ff4fa0" stroke-width="0.7" opacity="0.73"/>
<line x1="246.2" y1="-55.0" x2="255.0" y2="-64.9" stroke="#7fa2ff" stroke-width="0.5" opacity="0.61"/>
<line x1="63.1" y1="19.1" x2="52.3" y2="17.0" stroke="#ffffff" stroke-width="0.3" opacity="0.55"/>
<line x1="192.7" y1="47.7" x2="206.9" y2="52.0" stroke="#e0a0ff" stroke-width="0.4" opacity="0.49"/>
<line x1="88.7" y1="103.9" x2="73.9" y2="116.9" stroke="#ff4fa0" stroke-width="0.5" opacity="0.37"/>
<line x1="171.0" y1="58.2" x2="173.7" y2="65.3" stroke="#ff4fa0" stroke-width="0.5" opacity="0.37"/>
<line x1="82.2" y1="66.5" x2="60.3" y2="74.0" stroke="#e0a0ff" stroke-width="0.4" opacity="0.78"/>
<line x1="152.5" y1="-44.7" x2="152.0" y2="-49.2" stroke="#ff5fc8" stroke-width="0.3" opacity="0.77"/>
<line x1="299.9" y1="25.3" x2="314.5" y2="23.9" stroke="#e0a0ff" stroke-width="0.7" opacity="0.47"/>
<line x1="129.9" y1="32.6" x2="120.0" y2="30.8" stroke="#7fe0ff" stroke-width="0.4" opacity="0.42"/>
<line x1="125.5" y1="-40.9" x2="121.2" y2="-49.9" stroke="#ff4fa0" stroke-width="0.3" opacity="0.41"/>
<line x1="303.8" y1="68.7" x2="312.3" y2="70.5" stroke="#ffd24a" stroke-width="0.4" opacity="0.74"/>
<line x1="336.3" y1="71.4" x2="352.5" y2="74.5" stroke="#ff4fa0" stroke-width="0.3" opacity="0.54"/>
<line x1="176.7" y1="55.9" x2="179.7" y2="59.9" stroke="#ff5fc8" stroke-width="0.4" opacity="0.48"/>
<line x1="31.4" y1="109.8" x2="17.5" y2="117.2" stroke="#ffd24a" stroke-width="0.3" opacity="0.77"/>
<line x1="347.8" y1="36.4" x2="358.3" y2="36.3" stroke="#5f86ff" stroke-width="0.7" opacity="0.40"/>
<line x1="222.5" y1="-12.2" x2="234.8" y2="-22.8" stroke="#ffc04a" stroke-width="0.7" opacity="0.61"/>
<line x1="52.8" y1="53.9" x2="38.2" y2="55.9" stroke="#ffc04a" stroke-width="0.7" opacity="0.72"/>
<line x1="201.0" y1="108.6" x2="209.0" y2="123.5" stroke="#7fe0ff" stroke-width="0.5" opacity="0.78"/>
<line x1="192.6" y1="11.1" x2="198.5" y2="5.5" stroke="#ffd24a" stroke-width="0.4" opacity="0.37"/>
<line x1="255.6" y1="31.0" x2="280.0" y2="29.0" stroke="#ff5fc8" stroke-width="0.3" opacity="0.42"/>
<line x1="229.6" y1="77.0" x2="242.4" y2="84.5" stroke="#5f86ff" stroke-width="0.5" opacity="0.39"/>
<line x1="68.5" y1="23.8" x2="60.5" y2="22.6" stroke="#ffd24a" stroke-width="0.5" opacity="0.56"/>
<line x1="44.3" y1="8.4" x2="27.5" y2="4.1" stroke="#5f86ff" stroke-width="0.5" opacity="0.48"/>
<line x1="233.4" y1="32.4" x2="241.1" y2="31.7" stroke="#ffc04a" stroke-width="0.4" opacity="0.68"/>
<line x1="92.7" y1="104.6" x2="86.6" y2="110.3" stroke="#ffffff" stroke-width="0.7" opacity="0.41"/>
<line x1="85.7" y1="118.1" x2="81.1" y2="122.7" stroke="#ffc04a" stroke-width="0.7" opacity="0.80"/>
<line x1="252.9" y1="56.6" x2="269.4" y2="59.9" stroke="#ffffff" stroke-width="0.3" opacity="0.46"/>
<line x1="118.4" y1="63.5" x2="113.5" y2="66.2" stroke="#ffc04a" stroke-width="0.4" opacity="0.37"/>
<line x1="117.2" y1="39.6" x2="95.8" y2="40.1" stroke="#ff4fa0" stroke-width="0.5" opacity="0.36"/>
<line x1="103.2" y1="76.1" x2="92.9" y2="82.6" stroke="#ff5fc8" stroke-width="0.7" opacity="0.42"/>
<line x1="179.8" y1="89.8" x2="183.4" y2="100.9" stroke="#7fe0ff" stroke-width="0.3" opacity="0.44"/>
<line x1="109.3" y1="52.6" x2="104.2" y2="54.0" stroke="#5f86ff" stroke-width="0.7" opacity="0.68"/>
<line x1="239.9" y1="-46.8" x2="252.0" y2="-60.3" stroke="#e0a0ff" stroke-width="0.5" opacity="0.66"/>
<line x1="285.7" y1="108.1" x2="295.5" y2="113.6" stroke="#e0a0ff" stroke-width="0.4" opacity="0.75"/>
<line x1="150.2" y1="72.4" x2="144.9" y2="86.2" stroke="#ff5fc8" stroke-width="0.7" opacity="0.36"/>
<line x1="146.4" y1="52.4" x2="132.3" y2="63.9" stroke="#7fe0ff" stroke-width="0.7" opacity="0.47"/>
<line x1="79.8" y1="80.8" x2="68.5" y2="86.5" stroke="#ffffff" stroke-width="0.7" opacity="0.48"/>
<line x1="70.2" y1="-29.4" x2="54.5" y2="-40.9" stroke="#ff5fc8" stroke-width="0.7" opacity="0.74"/>
<line x1="161.5" y1="-8.7" x2="160.9" y2="-23.2" stroke="#5f86ff" stroke-width="0.7" opacity="0.76"/>
<line x1="134.6" y1="19.8" x2="121.2" y2="11.1" stroke="#ff4fa0" stroke-width="0.4" opacity="0.75"/>
<line x1="190.3" y1="90.3" x2="192.4" y2="94.3" stroke="#ffc04a" stroke-width="0.3" opacity="0.76"/>
<line x1="97.8" y1="36.4" x2="74.2" y2="35.6" stroke="#7fe0ff" stroke-width="0.4" opacity="0.72"/>
<line x1="242.0" y1="-54.8" x2="248.3" y2="-62.3" stroke="#5f86ff" stroke-width="0.7" opacity="0.65"/>
<line x1="104.6" y1="32.2" x2="93.0" y2="31.0" stroke="#7fe0ff" stroke-width="0.5" opacity="0.63"/>
<line x1="71.4" y1="110.0" x2="55.8" y2="122.1" stroke="#ffc04a" stroke-width="0.4" opacity="0.55"/>
<line x1="134.0" y1="-58.6" x2="130.6" y2="-70.0" stroke="#e0a0ff" stroke-width="0.4" opacity="0.43"/>
<line x1="243.5" y1="75.2" x2="264.1" y2="84.6" stroke="#ffc04a" stroke-width="0.7" opacity="0.73"/>
<line x1="104.3" y1="120.2" x2="99.3" y2="126.9" stroke="#ffd24a" stroke-width="0.7" opacity="0.75"/>
<line x1="102.8" y1="-39.9" x2="98.5" y2="-45.5" stroke="#5f86ff" stroke-width="0.7" opacity="0.45"/>
<line x1="145.5" y1="87.1" x2="144.1" y2="90.7" stroke="#5f86ff" stroke-width="0.3" opacity="0.44"/>
<line x1="145.2" y1="69.8" x2="142.3" y2="74.8" stroke="#e0a0ff" stroke-width="0.4" opacity="0.45"/>
<line x1="103.8" y1="-27.3" x2="99.6" y2="-32.0" stroke="#ffc04a" stroke-width="0.7" opacity="0.62"/>
<line x1="113.8" y1="53.9" x2="103.3" y2="57.1" stroke="#5f86ff" stroke-width="0.3" opacity="0.39"/>
<line x1="65.5" y1="24.9" x2="60.2" y2="24.2" stroke="#7fe0ff" stroke-width="0.5" opacity="0.58"/>
<line x1="70.1" y1="69.6" x2="58.1" y2="73.6" stroke="#ffc04a" stroke-width="0.7" opacity="0.51"/>
<line x1="268.3" y1="36.8" x2="277.3" y2="36.7" stroke="#ff4fa0" stroke-width="0.5" opacity="0.74"/>
<line x1="212.2" y1="75.9" x2="220.1" y2="81.9" stroke="#7fe0ff" stroke-width="0.5" opacity="0.57"/>
<line x1="2.9" y1="14.3" x2="-11.7" y2="12.1" stroke="#e0a0ff" stroke-width="0.3" opacity="0.61"/>
<line x1="190.4" y1="6.4" x2="193.5" y2="2.6" stroke="#ffc04a" stroke-width="0.5" opacity="0.61"/>
<line x1="131.3" y1="-1.2" x2="125.9" y2="-7.8" stroke="#ff4fa0" stroke-width="0.5" opacity="0.77"/>
<line x1="60.0" y1="71.2" x2="40.4" y2="77.4" stroke="#ff4fa0" stroke-width="0.7" opacity="0.52"/>
<line x1="194.7" y1="79.4" x2="198.6" y2="84.4" stroke="#ff4fa0" stroke-width="0.3" opacity="0.50"/>
<line x1="254.8" y1="127.4" x2="263.1" y2="135.6" stroke="#ffc04a" stroke-width="0.7" opacity="0.56"/>
<line x1="260.6" y1="0.6" x2="271.7" y2="-3.7" stroke="#7fa2ff" stroke-width="0.7" opacity="0.67"/>
<line x1="231.1" y1="108.0" x2="235.0" y2="112.0" stroke="#ffc04a" stroke-width="0.3" opacity="0.77"/>
<line x1="238.1" y1="-9.9" x2="247.5" y2="-16.1" stroke="#ff5fc8" stroke-width="0.7" opacity="0.47"/>
<line x1="93.5" y1="136.9" x2="90.5" y2="141.1" stroke="#ff5fc8" stroke-width="0.7" opacity="0.52"/>
<line x1="215.5" y1="80.1" x2="227.7" y2="89.9" stroke="#ffffff" stroke-width="0.4" opacity="0.65"/>
<line x1="164.8" y1="79.9" x2="165.1" y2="87.6" stroke="#5f86ff" stroke-width="0.3" opacity="0.39"/>
<line x1="121.0" y1="-46.2" x2="118.1" y2="-52.0" stroke="#e0a0ff" stroke-width="0.5" opacity="0.79"/>
<line x1="94.2" y1="118.1" x2="90.1" y2="122.7" stroke="#e0a0ff" stroke-width="0.5" opacity="0.80"/>
<line x1="278.5" y1="114.9" x2="288.5" y2="121.6" stroke="#ff4fa0" stroke-width="0.7" opacity="0.79"/>
<line x1="95.9" y1="57.7" x2="85.8" y2="60.5" stroke="#ff4fa0" stroke-width="0.4" opacity="0.37"/>
<line x1="226.1" y1="106.9" x2="230.8" y2="112.1" stroke="#7fe0ff" stroke-width="0.4" opacity="0.73"/>
<line x1="151.2" y1="-13.1" x2="150.3" y2="-16.7" stroke="#ffc04a" stroke-width="0.5" opacity="0.44"/>
<line x1="263.8" y1="131.4" x2="275.6" y2="142.3" stroke="#e0a0ff" stroke-width="0.7" opacity="0.68"/>
<line x1="231.2" y1="94.1" x2="243.0" y2="103.8" stroke="#7fe0ff" stroke-width="0.5" opacity="0.41"/>
<line x1="43.9" y1="-33.0" x2="38.1" y2="-36.5" stroke="#7fa2ff" stroke-width="0.3" opacity="0.63"/>
<line x1="23.7" y1="28.8" x2="6.4" y2="27.6" stroke="#e0a0ff" stroke-width="0.5" opacity="0.43"/>
<line x1="181.5" y1="18.0" x2="190.9" y2="7.2" stroke="#ff4fa0" stroke-width="0.4" opacity="0.35"/>
<line x1="89.1" y1="112.4" x2="76.8" y2="124.6" stroke="#5f86ff" stroke-width="0.3" opacity="0.37"/>
<line x1="170.5" y1="55.7" x2="174.6" y2="65.6" stroke="#5f86ff" stroke-width="0.4" opacity="0.55"/>
<line x1="165.9" y1="55.6" x2="166.7" y2="61.5" stroke="#7fe0ff" stroke-width="0.7" opacity="0.53"/>
<line x1="17.4" y1="106.2" x2="11.4" y2="109.0" stroke="#ffd24a" stroke-width="0.5" opacity="0.39"/>
<line x1="62.4" y1="79.2" x2="54.1" y2="82.6" stroke="#e0a0ff" stroke-width="0.5" opacity="0.64"/>
<line x1="251.7" y1="33.9" x2="276.8" y2="32.6" stroke="#ffd24a" stroke-width="0.7" opacity="0.64"/>
<line x1="180.8" y1="6.7" x2="185.5" y2="-2.0" stroke="#ffc04a" stroke-width="0.3" opacity="0.48"/>
<line x1="328.4" y1="-1.2" x2="336.1" y2="-3.0" stroke="#ffc04a" stroke-width="0.4" opacity="0.49"/>
<line x1="100.5" y1="33.4" x2="83.8" y2="32.0" stroke="#ffffff" stroke-width="0.3" opacity="0.38"/>
<line x1="305.3" y1="77.4" x2="325.0" y2="82.8" stroke="#ff4fa0" stroke-width="0.3" opacity="0.36"/>
<line x1="135.6" y1="41.4" x2="115.0" y2="43.5" stroke="#e0a0ff" stroke-width="0.3" opacity="0.37"/>
<line x1="129.0" y1="-2.2" x2="121.9" y2="-10.6" stroke="#ffffff" stroke-width="0.5" opacity="0.71"/>
<line x1="120.9" y1="104.4" x2="115.8" y2="112.3" stroke="#7fa2ff" stroke-width="0.3" opacity="0.78"/>
<line x1="178.2" y1="61.5" x2="186.0" y2="73.7" stroke="#ffc04a" stroke-width="0.4" opacity="0.63"/>
<line x1="281.0" y1="78.9" x2="295.3" y2="83.8" stroke="#ffc04a" stroke-width="0.3" opacity="0.57"/>
<line x1="93.8" y1="87.7" x2="89.3" y2="90.8" stroke="#5f86ff" stroke-width="0.7" opacity="0.55"/>
<line x1="65.2" y1="127.3" x2="58.4" y2="133.5" stroke="#e0a0ff" stroke-width="0.5" opacity="0.70"/>
<line x1="162.7" y1="2.4" x2="162.6" y2="-1.9" stroke="#ffffff" stroke-width="0.7" opacity="0.78"/>
<line x1="104.2" y1="43.8" x2="91.7" y2="44.9" stroke="#7fa2ff" stroke-width="0.4" opacity="0.80"/>
<line x1="251.1" y1="55.2" x2="264.1" y2="57.6" stroke="#5f86ff" stroke-width="0.3" opacity="0.64"/>
<line x1="249.0" y1="7.6" x2="261.6" y2="3.1" stroke="#ff4fa0" stroke-width="0.5" opacity="0.52"/>
<line x1="199.6" y1="-8.1" x2="209.4" y2="-20.9" stroke="#ff4fa0" stroke-width="0.5" opacity="0.76"/>
<line x1="76.8" y1="80.8" x2="70.5" y2="83.9" stroke="#ffd24a" stroke-width="0.3" opacity="0.64"/>
<line x1="157.4" y1="12.4" x2="154.3" y2="-0.8" stroke="#e0a0ff" stroke-width="0.7" opacity="0.52"/>
<line x1="66.8" y1="37.5" x2="57.3" y2="37.4" stroke="#ff4fa0" stroke-width="0.3" opacity="0.64"/>
<line x1="125.8" y1="-63.3" x2="123.8" y2="-68.8" stroke="#ff5fc8" stroke-width="0.4" opacity="0.53"/>
<line x1="117.6" y1="36.4" x2="110.3" y2="36.0" stroke="#ffd24a" stroke-width="0.5" opacity="0.60"/>
<g fill="#fff"><path d="M139.5 8 L139.5 4.2 Q143 -0.5 146.5 4.2 L146.5 8Z"/><circle cx="143" cy="5" r="1.6" fill="#1c37cc"/><text x="147.5" y="4" font-size="2.6" font-weight="700">BEWG</text><text x="147.5" y="7.6" font-size="3.4" font-weight="700">北控水务</text><path d="M170 7.5 q3 -1 2 -3 q-1 -2 3 -3.5 q-1.5 2 -.3 3.4 q1 2 -4.7 3.1Z"/><text x="176" y="7.3" font-size="3.6" font-weight="700" font-style="italic">蓝海星</text><text x="176" y="3.2" font-size="1.6">BLUE OCEAN</text></g>
<g fill="#fff" font-weight="700" font-style="italic" transform="skewX(-8)"><text x="59.5" y="42.3" font-size="21.5" letter-spacing="-1.5" transform="rotate(-2 110 40) translate(0 34) scale(1 1.22) translate(0 -34)">创新无止境</text><text x="169" y="39.6" font-size="23.5" letter-spacing="-1.7" transform="rotate(-2 220 38) translate(0 31) scale(1 1.22) translate(0 -31)">一起向未来</text></g>
<path d="M160 35.5 L196 31 L197 33.6 L161 38.5Z M238 33 L274 30.5 L271 34.5 L240 36Z" fill="#fff"/>
<path d="M126 45 L209.5 45 L208 51.2 L124.5 51.2Z" fill="#fff"/><text x="167" y="49.9" font-size="4.3" text-anchor="middle" fill="#1b2f9e" font-weight="500" letter-spacing=".1">云栖共赛暨四届第四届“之马奖”创新大赛</text>
<text x="166" y="64.3" font-size="3.6" text-anchor="middle" fill="#fff" letter-spacing=".5">二〇二二年</text>
</svg></div>
</div>
</body>
</html>
